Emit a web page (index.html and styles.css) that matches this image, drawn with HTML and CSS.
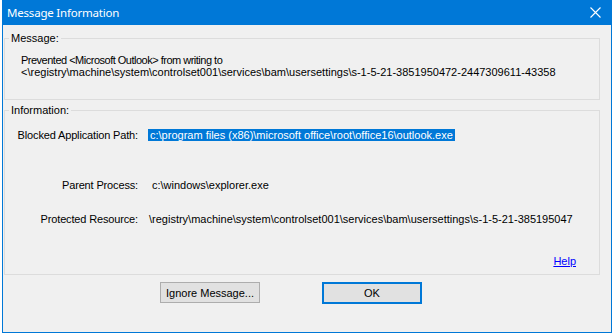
FILE: index.html
```html
<!DOCTYPE html>
<html lang="en">
<head>
    <meta charset="UTF-8">
    <meta name="viewport" content="width=device-width, initial-scale=1.0">
    <title>Message Information</title>
    <link rel="stylesheet" href="styles.css">
</head>
<body>
    <div class="window">
        <div class="titlebar">
            <span class="title">Message Information</span>
            <svg class="close" width="11" height="11" viewBox="0 0 11 11">
                <path d="M0.5 0.5 L10.5 10.5 M10.5 0.5 L0.5 10.5" stroke="#fff" stroke-width="1.1" fill="none"/>
            </svg>
        </div>
        <div class="client">
            <fieldset class="group group-message">
                <legend>Message:</legend>
                <div class="msg">
                    <div class="msg-first">Prevented &lt;Microsoft Outlook&gt; from writing to</div>
                    <div>&lt;\registry\machine\system\controlset001\services\bam\usersettings\s-1-5-21-3851950472-2447309611-43358</div>
                </div>
            </fieldset>
            <fieldset class="group group-info">
                <legend>Information:</legend>
                <div class="row row-path">
                    <span class="label">Blocked Application Path:</span>
                    <span class="value"><span class="selected">c:\program files (x86)\microsoft office\root\office16\outlook.exe</span></span>
                </div>
                <div class="row row-parent">
                    <span class="label">Parent Process:</span>
                    <span class="value value-parent">c:\windows\explorer.exe</span>
                </div>
                <div class="row row-resource">
                    <span class="label">Protected Resource:</span>
                    <span class="value value-resource">\registry\machine\system\controlset001\services\bam\usersettings\s-1-5-21-385195047</span>
                </div>
                <div class="help-row"><a href="#" class="help">Help</a></div>
            </fieldset>
            <div class="buttons">
                <button class="btn">Ignore Message...</button>
                <button class="btn btn-default">OK</button>
            </div>
        </div>
    </div>
</body>
</html>
```
FILE: styles.css
```css
body {
    margin: 0;
    background: #ffffff;
    font-family: "Liberation Sans", Arial, sans-serif;
    font-size: 11px;
    color: #000;
}

.window {
    margin-left: 2px;
    width: 608px;
    height: 332px;
    border: 1px solid #0078d7;
    border-top: none;
    background: #f0f0f0;
}

.titlebar {
    height: 25px;
    background: #0078d7;
    color: #fff;
    display: flex;
    align-items: center;
    justify-content: space-between;
    padding: 0 10px 0 4px;
}

.title {
    font-family: "Noto Sans", sans-serif;
    font-size: 11.5px;
    letter-spacing: -0.2px;
}

.close {
    margin-top: -1px;
}

.client {
    padding: 7px 0 0 1px;
}

.group {
    margin: 0;
    width: 596px;
    box-sizing: border-box;
    border: 1px solid #dcdcdc;
    padding: 0;
}

.group legend {
    margin-left: 4px;
    padding: 0 2px;
    line-height: 13px;
}

.msg {
    padding: 9px 0 21px 16px;
    width: 540px;
    overflow: hidden;
    white-space: nowrap;
    line-height: 12px;
}

.msg-first {
    letter-spacing: -0.5px;
}

.group-info {
    margin-top: 4px;
}

.row {
    display: flex;
    align-items: center;
    line-height: 14px;
}

.label {
    width: 133px;
    text-align: right;
    letter-spacing: -0.15px;
}

.value {
    padding-left: 10px;
    white-space: nowrap;
}

.selected {
    background: #0078d7;
    color: #fff;
    padding: 0 2px;
}

.row-path {
    margin-top: 11px;
}

.row-parent {
    margin-top: 36px;
}

.value-parent {
    padding-left: 14px;
}

.row-resource {
    margin-top: 20px;
}

.value-resource {
    padding-left: 11px;
}

.help-row {
    text-align: right;
    padding: 29px 23px 6px 0;
    line-height: 13px;
}

.help {
    color: #0000ff;
}

.buttons {
    display: flex;
    gap: 62px;
    padding: 7px 0 0 156px;
}

.btn {
    width: 100px;
    height: 21px;
    font-family: "Liberation Sans", Arial, sans-serif;
    font-size: 11px;
    background: #e1e1e1;
    border: 1px solid #adadad;
    padding: 0;
    color: #000;
}

.btn-default {
    border: 2px solid #0078d7;
    height: 22px;
}
```
